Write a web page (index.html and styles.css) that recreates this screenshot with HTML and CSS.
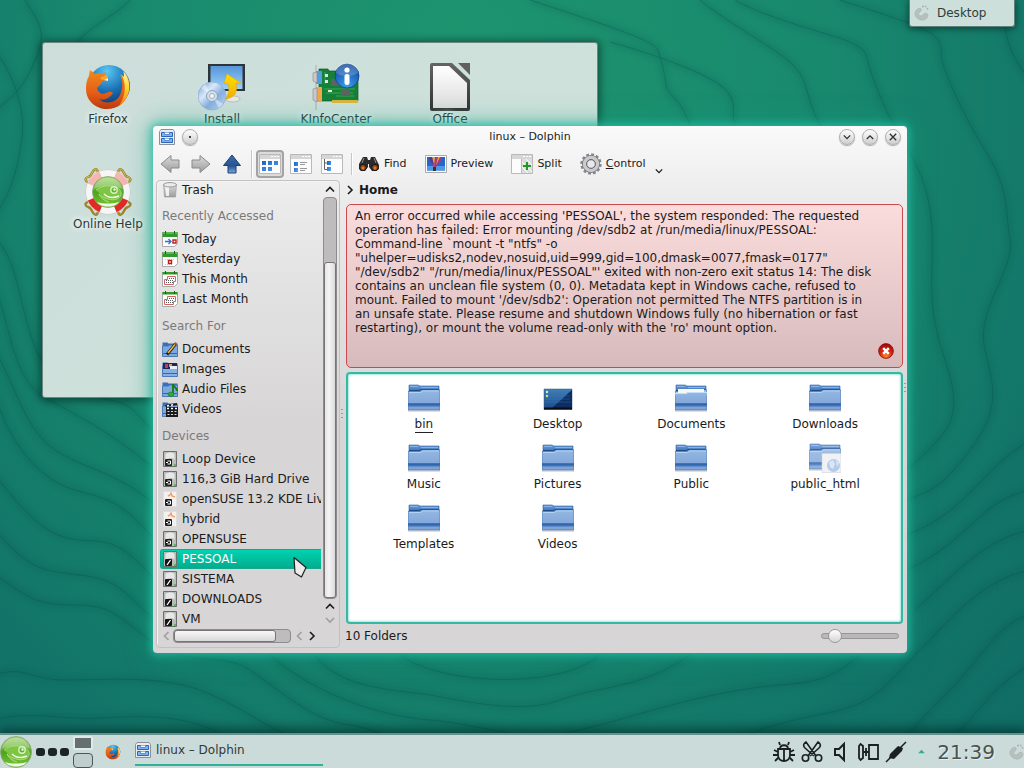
FILE: index.html
```html
<!DOCTYPE html>
<html lang="en">
<head>
<meta charset="utf-8">
<meta name="viewport" content="width=device-width, initial-scale=1">
<title>linux – Dolphin</title>
<link rel="stylesheet" href="styles.css">
</head>
<body>
<svg class="defs" aria-hidden="true">
  <defs>
    <linearGradient id="gFolder" x1="0" y1="0" x2="0" y2="1"><stop offset="0" stop-color="#94b7e2"/><stop offset="1" stop-color="#7ba1d6"/></linearGradient>
    <linearGradient id="gBack" x1="0" y1="0" x2="0" y2="1"><stop offset="0" stop-color="#6b9fdf"/><stop offset="1" stop-color="#2c5c9f"/></linearGradient>
    <linearGradient id="gGrey" x1="0" y1="0" x2="0" y2="1"><stop offset="0" stop-color="#dcdcdc"/><stop offset="1" stop-color="#9b9b9b"/></linearGradient>
    <linearGradient id="gUp" x1="0" y1="0" x2="0" y2="1"><stop offset="0" stop-color="#3f6cab"/><stop offset=".6" stop-color="#27528f"/><stop offset="1" stop-color="#7ba9df"/></linearGradient>
    <linearGradient id="gBlueBox" x1="0" y1="0" x2="1" y2="1"><stop offset="0" stop-color="#1a5fc4"/><stop offset="1" stop-color="#5aa2ee"/></linearGradient>
    <linearGradient id="gScreen" x1="0" y1="0" x2="0" y2="1"><stop offset="0" stop-color="#5596d8"/><stop offset="1" stop-color="#9cd0fa"/></linearGradient>
    <linearGradient id="gYellow" x1="0" y1="0" x2="0" y2="1"><stop offset="0" stop-color="#ffe000"/><stop offset="1" stop-color="#f2ad00"/></linearGradient>
    <linearGradient id="gDisc" x1="0" y1="0" x2="1" y2="1"><stop offset="0" stop-color="#6f9fda"/><stop offset=".35" stop-color="#d9e8f8"/><stop offset=".6" stop-color="#86aee0"/><stop offset="1" stop-color="#c8dcf4"/></linearGradient>
    <linearGradient id="gOffice" x1="0" y1="0" x2="0" y2="1"><stop offset="0" stop-color="#656565"/><stop offset="1" stop-color="#303030"/></linearGradient>
    <linearGradient id="gPaper" x1="0" y1="0" x2="0" y2="1"><stop offset="0" stop-color="#fff"/><stop offset="1" stop-color="#dcdcdc"/></linearGradient>
    <linearGradient id="gDesk" x1="0" y1="0" x2="0" y2="1"><stop offset="0" stop-color="#3f7fb4"/><stop offset="1" stop-color="#1b4b8b"/></linearGradient>
    <linearGradient id="gFox" x1="0" y1="0" x2="0" y2="1"><stop offset="0" stop-color="#f08a1c"/><stop offset=".6" stop-color="#e65c17"/><stop offset="1" stop-color="#b93a10"/></linearGradient>
    <linearGradient id="gTail" x1="0" y1="0" x2="0" y2="1"><stop offset="0" stop-color="#fff3a0"/><stop offset=".5" stop-color="#ffd52e"/><stop offset="1" stop-color="#ee7a1a"/></linearGradient>
    <radialGradient id="gGlobe" cx=".45" cy=".15" r=".9"><stop offset="0" stop-color="#5cc8f2"/><stop offset=".5" stop-color="#1c74b8"/><stop offset="1" stop-color="#0b2b63"/></radialGradient>
    <radialGradient id="gInfo" cx=".5" cy=".9" r=".9"><stop offset="0" stop-color="#3f9be8"/><stop offset="1" stop-color="#0c47a0"/></radialGradient>
    <linearGradient id="gGreen" x1="0" y1="0" x2="0" y2="1"><stop offset="0" stop-color="#a3d66f"/><stop offset=".5" stop-color="#4ea31c"/><stop offset="1" stop-color="#78c832"/></linearGradient>
    <radialGradient id="gRed" cx=".5" cy=".85" r=".8"><stop offset="0" stop-color="#f78b1e"/><stop offset=".5" stop-color="#d52a13"/><stop offset="1" stop-color="#a5060d"/></radialGradient>

    <symbol id="folder" viewBox="0 0 32 32">
      <path d="M1 3h9l2 1h19v8H1z" fill="url(#gBack)" stroke="#2f5fa3" stroke-width=".6"/>
      <path d="M2 4.500h8M13 5.500h17" stroke="#8dbaf0" stroke-width=".8"/><path d="M1 8.500h10l2-1h18" stroke="#1f4a8a" fill="none"/>
      <path d="M0 9.500h12l2-1.500h18v20H0z" fill="url(#gFolder)" stroke="#4673b0" stroke-width=".7"/>
      <path d="M1 10.400h11.500l2-1.500H31" fill="none" stroke="#c3e0fa" stroke-width=".8"/>
      <path d="M0 21.500h32v3H0z" fill="#3f74b8"/><path d="M0 21.500h32v1H0z" fill="#2659a0"/><path d="M0 29h32" stroke="#777" stroke-width=".8" opacity=".6"/>
    </symbol>
    <symbol id="folder-docs" viewBox="0 0 32 32">
      <use href="#folder"/><path d="M3 7h26v5H14l-2 1H3z" fill="#f7f7f5"/><path d="M0 11.500h11l2-1h19v3H0z" fill="#91b5e1"/><path d="M0 11.500h11l2-1h19" fill="none" stroke="#c3e0fa"/>
    </symbol>
    <symbol id="desktop" viewBox="0 0 32 32">
      <path d="M2 7h28v20.500H2z" fill="url(#gDesk)" stroke="#345a80" stroke-width=".5"/><path d="M30 8v18H10C17 20 24 13 30 8z" fill="#0d2d63"/>
      <path d="M3 14h25M3 17h25M3 20h26" stroke="#3e7bc0" stroke-width=".4"/><path d="M2 25.500h28v2H2z" fill="#080d18"/><circle cx="5" cy="10" r="1.200" fill="#d9e7d2"/><circle cx="5" cy="14" r="1.200" fill="#dfe36c"/>
    </symbol>
    <symbol id="folder-html" viewBox="0 0 32 32">
      <use href="#folder" y="-1" opacity=".85"/><path d="M13 11.500h19v19H13z" fill="#f2f2f4" stroke="#d2d4da" stroke-width=".6"/><circle cx="24.500" cy="23.500" r="6.500" fill="#b4cbe9"/><path d="M20 20l4-2 2 4-2 5-3-2zM27 18l3 3-2 4z" fill="#dbe6f5"/>
    </symbol>
    <symbol id="fox" viewBox="0 0 48 48">
      <circle cx="25" cy="23" r="21" fill="url(#gGlobe)"/>
      <path d="M40 9c5 5 6 11 5 18-2 12-11 19-22 19S2 38 2 26c0-6 1-10 3-13l1-6 5 4c3-1 5-1 7 0l4-2-2 5 3 2c-1 1-4 2-5 3-1 3-4 4-5 6 1 5 6 7 9 5 3-1 5-2 7 0-3 5-9 8-14 6 6 6 17 4 21-4 3-7 3-14 0-20 2 1 3 3 4 5 1-3 1-6 0-8z" fill="url(#gFox)"/>
      <path d="M39 8c7 7 8 18 4 26-2 4-5 7-8 9 5-8 7-16 5-25-1-3-2-6-4-7 2 1 3 2 4 3 0-2 0-4-1-6z" fill="url(#gTail)"/>
      <path d="M16 15c3-2 6-3 8-3l-1 4-5 1z" fill="#f9a42b"/><path d="M20 17l4-2v3z" fill="#fff1d0"/>
    </symbol>
    <symbol id="install" viewBox="0 0 48 48">
      <ellipse cx="35" cy="36" rx="7" ry="3" fill="#e8e8e8" stroke="#999" stroke-width=".5"/>
      <path d="M10 1h37v27H10z" fill="#2f3438"/><path d="M12.500 3h32v23h-32z" fill="url(#gScreen)"/>
      <path d="M29 11l14 9h-5c2 9-1 15-11 16 3-3 5-9 3-15l-4-1z" fill="url(#gYellow)" stroke="#e0a400" stroke-width=".5"/>
      <circle cx="14" cy="33" r="14" fill="url(#gDisc)" stroke="#92add0" stroke-width=".7"/><path d="M14 33L3 25l4-4zM14 33l11 8-4 4z" fill="#fff" opacity=".45"/><circle cx="14" cy="33" r="5.500" fill="#d4dfea" stroke="#8da5c0"/><circle cx="14" cy="33" r="2.500" fill="#f3f6f8" stroke="#7b8998" stroke-width=".6"/>
    </symbol>
    <symbol id="kinfo" viewBox="0 0 48 48">
      <path d="M4 2v45" stroke="#bbb" stroke-width="1.500"/><path d="M7 6h9l1 2h29v30H7z" fill="#16803a" stroke="#0b5a25" stroke-width=".7"/>
      <path d="M12 26h31M14 30h27M24 33h18M13 9v12" stroke="#3fae50" stroke-width=".9"/><path d="M20 37h26v3H20z" fill="#d8b53c"/>
      <path d="M4 8h6v13H4z" fill="#4f9fe0"/><path d="M4 24h6v15H4z" fill="#f1a64a"/><path d="M1 10l4-1v11l-4-2zM1 26l4-1v14l-4-2z" fill="#c9c9c9" stroke="#888" stroke-width=".6"/>
      <path d="M19 16h8v7h-8zM29 26h9v7h-9z" fill="#5b6460"/><path d="M13 11h3v3h-3zM13 17h3v3h-3zM16 27h4v2h-4z" fill="#dbe7dc"/>
      <circle cx="35" cy="13" r="12" fill="url(#gInfo)" stroke="#0c3c8c" stroke-width=".7"/><path d="M24 10a11 11 0 0 1 22 0c-5 4-17 4-22 0z" fill="#fff" opacity=".2"/><circle cx="35" cy="7" r="2.600" fill="#fff"/><rect x="32.500" y="11" width="5" height="11" rx="2.500" fill="#fff"/>
    </symbol>
    <symbol id="office" viewBox="0 0 48 48">
      <path d="M6 0h20l18 17v29a2 2 0 0 1-2 2H6a2 2 0 0 1-2-2V2a2 2 0 0 1 2-2z" fill="url(#gOffice)"/><path d="M7 3h16l18 17v25H7z" fill="url(#gPaper)"/><path d="M32 0h12v12z" fill="#606060"/>
    </symbol>
    <symbol id="gecko" viewBox="0 0 32 32">
      <circle cx="16" cy="16" r="15.500" fill="url(#gGreen)" stroke="#8aa57a" stroke-width=".8"/>
      <path d="M2 13C4-2 28-2 30 13c-6-3-20-4-28 0z" fill="#fff" opacity=".3"/>
      <path d="M4 14c7-6 16-4 20-3 4 2 6 5 5 8-1 4-7 6-13 4-4-1-7-3-9-5 1 3 5 7 10 8" fill="#7ec544" stroke="#b8e391" stroke-width=".8"/>
      <circle cx="22" cy="14" r="3.200" fill="#62b42c" stroke="#d9f2c4" stroke-width="1.400"/><circle cx="22.500" cy="13.500" r="1.200" fill="#effbe5"/><path d="M12 18c4 4 10 4 15 2" stroke="#eefbe2" stroke-width="1.500" fill="none"/>
      <path d="M5 26c6 2 15 2 22 0-4 6-18 6-22 0z" fill="#f1fae8"/>
    </symbol>
    <symbol id="help" viewBox="0 0 48 48">
      <path d="M10 14C2 16-1 11 4 9c5-1 3-7 8-8 3 1 1 6 5 9M38 14c8 2 11-3 6-5-5-1-3-7-8-8-3 1-1 6-5 9M10 34c-8-2-11 3-6 5 5 1 3 7 8 8 3-1 1-6 5-9M38 34c8-2 11 3 6 5-5 1-3 7-8 8-3-1-1-6-5-9" fill="none" stroke="#9f8427" stroke-width="2.400"/>
      <path d="M10 14C2 16-1 11 4 9c5-1 3-7 8-8 3 1 1 6 5 9M38 14c8 2 11-3 6-5-5-1-3-7-8-8-3 1-1 6-5 9" fill="none" stroke="#d9c468" stroke-width="1"/>
      <circle cx="24" cy="24" r="18" fill="none" stroke="#c7c7c7" stroke-width="9"/><circle cx="24" cy="24" r="18" fill="none" stroke="#f6f6f6" stroke-width="8"/>
      <path d="M7.500 17A18 18 0 0 1 17 7.500M31 7.500a18 18 0 0 1 9.500 9.500" stroke="#f7b4b0" stroke-width="8" fill="none"/><path d="M40.500 31a18 18 0 0 1-9.500 9.500M17 40.500A18 18 0 0 1 7.500 31" stroke="#e02a24" stroke-width="8" fill="none"/>
      <use href="#gecko" x="8" y="8" width="32" height="32"/>
    </symbol>
    <symbol id="cabinet" viewBox="0 0 16 16">
      <path d="M2 .500h12l1.500 2v13H.500v-13z" fill="#e9ebee" stroke="#8a9099"/><path d="M2.500 3.500h11v4h-11zM2.500 9.500h11v4h-11z" fill="#7db5f4" stroke="#2a65b8"/><path d="M5.500 3.500v2h5v-2M5.500 9.500v2h5v-2" fill="#fff" stroke="#5f8cc8"/>
    </symbol>
    <symbol id="arrow-left" viewBox="0 0 20 20"><path d="M1 10l10-8.500V6h8v8h-8v4.500z" fill="url(#gGrey)" stroke="#8a8a8a"/></symbol>
    <symbol id="arrow-right" viewBox="0 0 20 20"><path d="M19 10L9 1.500V6H1v8h8v4.500z" fill="url(#gGrey)" stroke="#8a8a8a"/></symbol>
    <symbol id="arrow-up" viewBox="0 0 20 20"><path d="M10 1l8.500 10.500H14V19H6v-7.500H1.500z" fill="url(#gUp)" stroke="#1d3f72"/></symbol>
    <symbol id="win" viewBox="0 0 22 20"><path d="M.500.500h21v19H.500z" fill="#fcfcfc" stroke="#b9b9b9"/><path d="M1 1h20v4H1z" fill="#d6d6d6"/><path d="M12 2.500h2M15 2.500h2M18 2.500h2" stroke="#fff"/></symbol>
    <symbol id="view-icons" viewBox="0 0 22 20"><use href="#win"/><path d="M3 7h4v4H3zM9 7h4v4H9zM15 7h4v4h-4zM3 13h4v4H3zM9 13h4v4H9z" fill="url(#gBlueBox)"/></symbol>
    <symbol id="view-details" viewBox="0 0 22 20"><use href="#win"/><path d="M4 8h4v4H4zM4 14h4v4H4z" fill="url(#gBlueBox)"/><path d="M10 8.500h7M10 10.500h5M10 14.500h7M10 16.500h5" stroke="#999"/></symbol>
    <symbol id="view-tree" viewBox="0 0 22 20"><use href="#win"/><path d="M3.500 5v10.500H6M3.500 9H6" stroke="#666" fill="none"/><path d="M6 7h4v4H6zM6 13h4v4H6z" fill="url(#gBlueBox)"/></symbol>
    <symbol id="find" viewBox="0 0 22 16"><path d="M5 1h4l1 3h2l1-3h4l4 8v4l-3 2h-4l-3-4v-3h-1v3l-3 4H3l-2-2V8z" fill="#2b2b2b"/><path d="M6 2l-2 5M16 2l2 5" stroke="#909090"/><circle cx="5" cy="11.500" r="3.200" fill="#934312" stroke="#171717"/><circle cx="17" cy="11.500" r="3.200" fill="#934312" stroke="#171717"/><circle cx="5" cy="12" r="1.500" fill="#d77a2b"/><circle cx="17" cy="12" r="1.500" fill="#d77a2b"/></symbol>
    <symbol id="preview" viewBox="0 0 22 18"><path d="M.500.500h21v17H.500z" fill="#fff" stroke="#aaa"/><path d="M2 2h18v13.500H2z" fill="#2367cb"/><path d="M2 11h18v4.500H2z" fill="#4d97e8"/><path d="M4 2h13c0 5-4 7-6 10h-2C8 9 4 7 4 2z" fill="#a63a7e"/><path d="M7 2l2 9 1-9zM13 2l-2 8 4-8z" fill="#e2a83b"/><path d="M4 2h3l2 8c-3-2-5-5-5-8z" fill="#5c3a82"/><path d="M8 12h3v4H8z" fill="#4a3018"/></symbol>
    <symbol id="split" viewBox="0 0 22 20"><use href="#win"/><path d="M11 5h10v14H11z" fill="#ddd"/><path d="M11 8l10 10M15 5l6 6M11 13l6 6" stroke="#fff"/><path d="M10.500 5v14" stroke="#bbb"/><path d="M16 8v8M12 12h8" stroke="#249724" stroke-width="2"/></symbol>
    <symbol id="gear" viewBox="0 0 22 22"><circle cx="11" cy="11" r="9.200" fill="none" stroke="#8a8a90" stroke-width="3" stroke-dasharray="2.800 2"/><circle cx="11" cy="11" r="6.500" fill="none" stroke="#707076" stroke-width="5"/><circle cx="11" cy="11" r="6.500" fill="none" stroke="#c9c9ce" stroke-width="3.600"/><circle cx="11" cy="11" r="4.300" fill="#e9e9e9" stroke="#66666c"/></symbol>
    <symbol id="trash" viewBox="0 0 16 16"><path d="M1.500 2.500h13L13.500 15h-11z" fill="url(#gGrey)" stroke="#999" stroke-width=".6"/><path d="M3 4l1 10h3V4z" fill="#fff" opacity=".8"/><ellipse cx="8" cy="2.800" rx="6.500" ry="2.200" fill="#ececec" stroke="#999"/></symbol>
    <symbol id="cal-base" viewBox="0 0 16 16"><path d="M.500 1.500h15v11l-3 3H.500z" fill="#fff" stroke="#aaa"/><path d="M.500 1h15v5H.500z" fill="#2f9a2b"/><path d="M1 2h14" stroke="#8fd47f"/><path d="M3.500 0v3M12.500 0v3" stroke="#1d5f1b"/></symbol>
    <symbol id="cal-today" viewBox="0 0 16 16"><use href="#cal-base"/><path d="M3 10.500h6M6.500 8l2.500 2.500L6.500 13" stroke="#2a72d0" stroke-width="1.300" fill="none"/><path d="M11 9h3v3h-3z" fill="#fff" stroke="#c41818" stroke-width="1.400"/></symbol>
    <symbol id="cal-yest" viewBox="0 0 16 16"><use href="#cal-base"/><path d="M3 8.500h10M3 13.500h8" stroke="#ccc" stroke-dasharray="1 1"/><path d="M6.500 9.500h3v3h-3z" fill="#fff" stroke="#c41818" stroke-width="1.400"/></symbol>
    <symbol id="cal-month" viewBox="0 0 16 16"><path d="M.500 1.500h15v11l-3 3H.500z" fill="#fff" stroke="#aaa"/><path d="M.500 1h15v2.500H.500z" fill="#2f9a2b"/><path d="M3.500 0v3M12.500 0v3" stroke="#1d5f1b"/><path d="M5.500 5.500h8v5h-2v3h-9v-5h3z" fill="#fff" stroke="#d06464"/><path d="M7 7.500h5.500M4 9.500h8M4 11.500h7" stroke="#555" stroke-dasharray="1 1"/></symbol>
    <symbol id="sf" viewBox="0 0 16 16"><path d="M.500 1.500h5l1 1h9v13H.500z" fill="#3b70b7"/><path d="M.500 5h6l1-1h8v11.500H.500z" fill="#7ba8de" stroke="#3d6fb0" stroke-width=".8"/><path d="M1 12.500h14" stroke="#3466aa"/></symbol>
    <symbol id="s-docs" viewBox="0 0 16 16"><use href="#sf"/><path d="M5 13.500L13.500 3" stroke="#1c1c1c" stroke-width="3"/><path d="M6 12L13 3.500" stroke="#f1b62f" stroke-width="1.600"/><path d="M13 3l1.500-1" stroke="#d34b3a" stroke-width="2.500"/></symbol>
    <symbol id="s-images" viewBox="0 0 16 16"><use href="#sf"/><path d="M1 2h14v6H1z" fill="#202755"/><path d="M3 3h3v4H3z" fill="#b83d6d"/><path d="M7 3h3v3H7z" fill="#dd9a4e"/><path d="M8 5h7v3H8z" fill="#e8eef6"/><path d="M1 8h14v7H1z" fill="#85b0e4"/><path d="M1 12.500h14" stroke="#3466aa"/></symbol>
    <symbol id="s-audio" viewBox="0 0 16 16"><use href="#sf"/><path d="M11 13V3c0 3 4 3 4 7" stroke="#157b15" stroke-width="1.800" fill="none"/><ellipse cx="9" cy="13.300" rx="2.900" ry="2.200" fill="#36a834" stroke="#157b15" stroke-width=".6"/></symbol>
    <symbol id="s-video" viewBox="0 0 16 16"><use href="#sf"/><path d="M4 6h12v10H4zM3 4l12-2v2L4 6z" fill="#1b1b1b"/><path d="M5 5l2-.500M9 4.300l2-.500M5 7.500h2M9 7.500h2M13 7.500h2" stroke="#fff" stroke-width="1.400"/><path d="M5.500 10.500H15M5.500 13.500H15" stroke="#ddd" stroke-dasharray="2 1.500"/></symbol>
    <symbol id="disk" viewBox="0 0 16 16"><path d="M1.500.500h13v15h-13z" fill="#b9bcb9" stroke="#6a6e6c"/><path d="M3.500 3c3-2 7-2 9 0v6c-2-3-6-2-9 0z" fill="#e7e9e7"/><path d="M12 14h2" stroke="#30c030" stroke-width="1.500"/></symbol>
    <symbol id="plug" viewBox="0 0 16 16"><rect x="3" y="8" width="7" height="7" rx="1" fill="#1d1d1d"/><path d="M5.500 10h3v3h-3M4 11.500h2" fill="none" stroke="#fff"/></symbol>
    <symbol id="d-plug" viewBox="0 0 16 16"><use href="#disk"/><use href="#plug"/></symbol>
    <symbol id="d-iso" viewBox="0 0 16 16"><path d="M1.500.500h13v15h-13z" fill="#f3f1ef" stroke="#dedede"/><path d="M6 5l2-1 1-2 1 3 3 1" stroke="#f0a070" stroke-width="1.400" fill="none"/><use href="#plug"/></symbol>
    <symbol id="d-mount" viewBox="0 0 16 16"><use href="#disk"/><rect x="3" y="8" width="7" height="7" rx="1" fill="#151515"/><path d="M5 14l3.500-5" stroke="#fff" stroke-width="1.300"/></symbol>
    <symbol id="close-red" viewBox="0 0 16 16"><circle cx="8" cy="8" r="7.400" fill="url(#gRed)" stroke="#8d0b0d" stroke-width=".8"/><path d="M5.200 5.200l5.600 5.600M10.800 5.200l-5.600 5.600" stroke="#fff" stroke-width="2.400"/></symbol>
    <symbol id="chev-up" viewBox="0 0 10 10"><path d="M1 7.500l4-4 4 4" fill="none" stroke="currentColor" stroke-width="1.600"/></symbol>
    <symbol id="chev-down" viewBox="0 0 10 10"><path d="M1 3l4 4 4-4" fill="none" stroke="currentColor" stroke-width="1.600"/></symbol>
    <symbol id="chev-left" viewBox="0 0 10 10"><path d="M7.500 1l-4 4 4 4" fill="none" stroke="currentColor" stroke-width="1.600"/></symbol>
    <symbol id="chev-right" viewBox="0 0 10 10"><path d="M3 1l4 4-4 4" fill="none" stroke="currentColor" stroke-width="1.600"/></symbol>
    <symbol id="cashew" viewBox="0 0 16 16"><path d="M6 3C1 4-1 10 3 13c4 4 11 2 11-3-1-3-4-2-5 0-3 2-5 0-4-2 1-2 3-1 2-4z" fill="#b6bfbc" stroke="#a8b4b0" stroke-width=".6"/><path d="M8 1.500h2M11 1.500h1.500M13.500 3v1.500" stroke="#a5b0ac" stroke-width="1.500"/></symbol>
    <symbol id="t-bug" viewBox="0 0 22 22"><g fill="none" stroke="#1b2020" stroke-width="1.800"><path d="M5 8h12v6c0 8-12 8-12 0zM11 8v12M7 8c0-5 8-5 8 0M7 4L6 1M15 4l1-3M5 11L1 9M5 14H0M5 17l-3 3M17 11l4-2M17 14h5M17 17l3 3"/></g></symbol>
    <symbol id="t-clip" viewBox="0 0 22 22"><g fill="none" stroke="#1b2020" stroke-width="1.600"><circle cx="4.500" cy="17" r="3.200"/><circle cx="17.500" cy="17" r="3.200"/><path d="M7 15L17 1c3 2 3 4 1 6l-9 8M15 15L5 1C2 3 2 5 4 7l9 8"/></g></symbol>
    <symbol id="t-vol" viewBox="0 0 22 22"><path d="M6 8h4l5-5v16l-5-5H6z" fill="none" stroke="#1b2020" stroke-width="2"/></symbol>
    <symbol id="t-dev" viewBox="0 0 22 22"><g fill="none" stroke="#1b2020" stroke-width="1.800"><path d="M2 5l1.500-2L6 5v12l-2.500 2L2 17zM12 4h9v14h-9zM6 11h6M9 7v8"/></g></symbol>
    <symbol id="t-plug" viewBox="0 0 22 22"><path d="M1 21l6-6M15 7l6-6" stroke="#1b2020" stroke-width="1.500"/><path d="M5 13l8-8 5 2-1 3-8 8-5-1z" fill="#1b2020"/></symbol>
    <symbol id="cursor" viewBox="0 0 16 24"><path d="M2 1.500l12 10-4.500 9.500L3 17z" fill="#ececec" stroke="#222" stroke-width="1.200" stroke-linejoin="round"/></symbol>
  </defs>
</svg>

<main class="desktop">
  <svg class="wallpaper" viewBox="0 0 1024 768" preserveAspectRatio="xMidYMid slice" aria-hidden="true">
    <defs><filter id="soft"><feGaussianBlur stdDeviation="3"/></filter>
    <g id="contours" fill="none">
      <path d="M25 0C35 18 50 30 35 60C20 100 0 100-10 120"/><path d="M130 0C110 20 90 25 75 45"/><path d="M-5 50C10 70 30 110 20 150C12 200-5 210-5 220"/>
      <path d="M-5 238C18 260 18 300 34 345C45 375 80 395 110 400S140 425 155 430"/><path d="M-5 290C10 320 10 370 40 395C75 415 110 430 155 470"/><path d="M-5 350C15 385 25 430 55 450S115 470 155 505"/><path d="M-5 395C10 445 40 480 75 490S120 500 155 540"/><path d="M-5 475C30 520 50 538 80 540S120 540 155 580"/><path d="M-5 530C30 570 40 570 80 575S120 590 155 620"/><path d="M-5 575C20 590 30 605 70 605S110 610 150 640S220 650 250 670S310 720 350 725S440 770 480 770"/>
      <path d="M-5 675C25 665 30 680 65 680S160 675 200 690S260 725 300 740S340 760 350 770"/><path d="M-5 720C30 710 60 720 100 718S170 715 200 725S235 750 240 768"/>
      <path d="M400 655C440 685 560 690 600 655"/><path d="M315 655C340 690 400 690 430 695S520 715 560 700S640 690 690 655"/><path d="M270 655C310 690 370 715 430 720S520 745 580 730S680 700 740 690S820 690 860 655"/>
      <path d="M610 42C640 50 700 70 720 85S730 110 735 126"/><path d="M530 0C590 20 655 40 658 50S664 70 666 84S680 95 690 126"/><path d="M700 0C730 25 780 50 795 67S805 100 822 128"/><path d="M735 0C770 20 835 35 850 42S866 53 868 62S880 100 895 127S930 180 932 230S925 300 945 360S950 430 907 470"/><path d="M840 0C870 10 920 25 932 34S940 50 942 60S960 110 985 150S1005 210 1010 240S975 310 985 350S1000 410 970 450S930 490 907 500"/><path d="M1005 27C1008 50 1018 65 1030 80"/>
      <path d="M1030 440C980 470 970 510 907 535"/><path d="M1030 490C980 500 970 540 907 570"/><path d="M1030 530C980 540 950 580 915 610"/><path d="M1030 570C980 580 950 620 920 650S880 700 840 710S740 725 700 768"/><path d="M1030 615C1000 620 980 660 950 690S900 740 890 768"/><path d="M1030 665C1000 680 980 710 960 730S930 750 930 768"/>
    </g></defs>
    <use href="#contours" stroke="#00453f" stroke-width="6" opacity=".18" filter="url(#soft)"/><use href="#contours" stroke="#064f49" stroke-width="1" opacity=".32"/>
  </svg>

  <section class="folder-view" aria-label="Desktop folder">
    <a class="launcher" href="#"><svg><use href="#fox"/></svg><span>Firefox</span></a>
    <a class="launcher" href="#"><svg><use href="#install"/></svg><span>Install</span></a>
    <a class="launcher" href="#"><svg><use href="#kinfo"/></svg><span>KInfoCenter</span></a>
    <a class="launcher" href="#"><svg><use href="#office"/></svg><span>Office</span></a>
    <a class="launcher" href="#"><svg><use href="#help"/></svg><span>Online Help</span></a>
  </section>

  <button class="toolbox"><svg class="i16"><use href="#cashew"/></svg><span>Desktop</span></button>

  <section class="window" aria-label="linux – Dolphin">
    <header class="titlebar">
      <div class="title-left"><svg class="i16"><use href="#cabinet"/></svg><button class="round" aria-label="Pin"><i class="dot"></i></button></div>
      <h1 class="title">linux – Dolphin</h1>
      <div class="title-right">
        <button class="round" aria-label="Minimize"><svg><use href="#chev-down"/></svg></button>
        <button class="round" aria-label="Maximize"><svg><use href="#chev-up"/></svg></button>
        <button class="round" aria-label="Close"><svg viewBox="0 0 10 10"><path d="M1 1l8 8M9 1l-8 8" stroke="currentColor" stroke-width="1.600"/></svg></button>
      </div>
    </header>
    <div class="toolbar" role="toolbar">
      <div class="group nav">
        <button class="tool" aria-label="Back"><svg class="i20"><use href="#arrow-left"/></svg></button>
        <button class="tool" aria-label="Forward"><svg class="i20"><use href="#arrow-right"/></svg></button>
        <button class="tool" aria-label="Up"><svg class="i20"><use href="#arrow-up"/></svg></button>
      </div>
      <div class="group views">
        <button class="tool view pressed" aria-label="Icons"><svg class="i22"><use href="#view-icons"/></svg></button>
        <button class="tool view" aria-label="Compact"><svg class="i22"><use href="#view-details"/></svg></button>
        <button class="tool view" aria-label="Details"><svg class="i22"><use href="#view-tree"/></svg></button>
      </div>
      <div class="group actions">
        <button class="tool"><svg class="i22"><use href="#find"/></svg>Find</button>
        <button class="tool"><svg class="i22"><use href="#preview"/></svg>Preview</button>
        <button class="tool"><svg class="i22"><use href="#split"/></svg>Split</button>
        <button class="tool"><svg class="i22"><use href="#gear"/></svg><span><u>C</u>ontrol</span><svg class="drop"><use href="#chev-down"/></svg></button>
      </div>
    </div>

    <div class="body">
      <aside class="places">
        <div class="places-main">
          <nav class="place-list">
            <a class="place first" href="#"><svg class="i16"><use href="#trash"/></svg>Trash</a>
            <h2>Recently Accessed</h2>
            <a class="place" href="#"><svg class="i16"><use href="#cal-today"/></svg>Today</a>
            <a class="place" href="#"><svg class="i16"><use href="#cal-yest"/></svg>Yesterday</a>
            <a class="place" href="#"><svg class="i16"><use href="#cal-month"/></svg>This Month</a>
            <a class="place" href="#"><svg class="i16"><use href="#cal-month"/></svg>Last Month</a>
            <h2>Search For</h2>
            <a class="place" href="#"><svg class="i16"><use href="#s-docs"/></svg>Documents</a>
            <a class="place" href="#"><svg class="i16"><use href="#s-images"/></svg>Images</a>
            <a class="place" href="#"><svg class="i16"><use href="#s-audio"/></svg>Audio Files</a>
            <a class="place" href="#"><svg class="i16"><use href="#s-video"/></svg>Videos</a>
            <h2>Devices</h2>
            <a class="place" href="#"><svg class="i16"><use href="#d-plug"/></svg>Loop Device</a>
            <a class="place" href="#"><svg class="i16"><use href="#d-plug"/></svg>116,3 GiB Hard Drive</a>
            <a class="place" href="#"><svg class="i16"><use href="#d-iso"/></svg>openSUSE 13.2 KDE Liv</a>
            <a class="place" href="#"><svg class="i16"><use href="#d-iso"/></svg>hybrid</a>
            <a class="place" href="#"><svg class="i16"><use href="#d-plug"/></svg>OPENSUSE</a>
            <a class="place selected" href="#"><svg class="i16"><use href="#d-mount"/></svg>PESSOAL</a>
            <a class="place" href="#"><svg class="i16"><use href="#d-mount"/></svg>SISTEMA</a>
            <a class="place" href="#"><svg class="i16"><use href="#d-mount"/></svg>DOWNLOADS</a>
            <a class="place" href="#"><svg class="i16"><use href="#d-mount"/></svg>VM</a>
          </nav>
          <div class="vscroll">
            <button aria-label="Scroll up"><svg><use href="#chev-up"/></svg></button>
            <div class="vgroove"><div class="vhandle"></div></div>
            <button aria-label="Scroll up"><svg><use href="#chev-up"/></svg></button>
            <button class="off" aria-label="Scroll down"><svg><use href="#chev-down"/></svg></button>
          </div>
        </div>
        <div class="hscroll">
          <button class="off" aria-label="Scroll left"><svg><use href="#chev-left"/></svg></button>
          <div class="hgroove"><div class="hhandle"></div></div>
          <button class="off" aria-label="Scroll left"><svg><use href="#chev-left"/></svg></button>
          <button aria-label="Scroll right"><svg><use href="#chev-right"/></svg></button>
        </div>
      </aside>
      <i class="grip"></i>
      <div class="content">
        <nav class="crumbs"><svg><use href="#chev-right"/></svg><a href="#">Home</a></nav>
        <div class="error" role="alert">
          <p>An error occurred while accessing 'PESSOAL', the system responded: The requested operation has failed: Error mounting /dev/sdb2 at /run/media/linux/PESSOAL: <span class="keep">Command-line</span> `mount -t "ntfs" -o "uhelper=udisks2,nodev,nosuid,uid=999,gid=100,dmask=0077,fmask=0177" "/dev/sdb2" "/run/media/linux/PESSOAL"' exited with non-zero exit status 14: The disk contains an unclean file system (0, 0). Metadata kept in Windows cache, refused to mount. Failed to mount '/dev/sdb2': Operation not permitted The NTFS partition is in an unsafe state. Please resume and shutdown Windows fully (no hibernation or fast restarting), or mount the volume read-only with the 'ro' mount option.</p>
          <button class="dismiss" aria-label="Close message"><svg class="i16"><use href="#close-red"/></svg></button>
        </div>
        <div class="files">
          <a class="file current" href="#"><svg><use href="#folder"/></svg><span>bin</span></a>
          <a class="file" href="#"><svg><use href="#desktop"/></svg><span>Desktop</span></a>
          <a class="file" href="#"><svg><use href="#folder-docs"/></svg><span>Documents</span></a>
          <a class="file" href="#"><svg><use href="#folder"/></svg><span>Downloads</span></a>
          <a class="file" href="#"><svg><use href="#folder"/></svg><span>Music</span></a>
          <a class="file" href="#"><svg><use href="#folder"/></svg><span>Pictures</span></a>
          <a class="file" href="#"><svg><use href="#folder"/></svg><span>Public</span></a>
          <a class="file" href="#"><svg><use href="#folder-html"/></svg><span>public_html</span></a>
          <a class="file" href="#"><svg><use href="#folder"/></svg><span>Templates</span></a>
          <a class="file" href="#"><svg><use href="#folder"/></svg><span>Videos</span></a>
        </div>
        <footer class="status"><label for="zoom">10 Folders</label><input id="zoom" class="zoom" type="range" min="0" max="100" value="9"></footer>
      </div>
      <i class="grip right"></i>
    </div>
    <svg class="pointer" aria-hidden="true"><use href="#cursor"/></svg>
  </section>

  <footer class="panel">
    <button class="start" aria-label="Application launcher"><svg><use href="#gecko"/></svg></button>
    <button class="activities" aria-label="Activities"><i></i><i></i><i></i></button>
    <div class="pager"><button class="active" aria-label="Desktop 1"></button><button aria-label="Desktop 2"></button></div>
    <button class="quick" aria-label="Firefox"><svg class="i16"><use href="#fox"/></svg></button>
    <button class="task"><svg class="i16"><use href="#cabinet"/></svg><span>linux – Dolphin</span></button>
    <div class="tray">
      <button aria-label="Bug reports"><svg><use href="#t-bug"/></svg></button>
      <button aria-label="Clipboard"><svg><use href="#t-clip"/></svg></button>
      <button aria-label="Volume"><svg><use href="#t-vol"/></svg></button>
      <button aria-label="Devices"><svg><use href="#t-dev"/></svg></button>
      <button aria-label="Network"><svg><use href="#t-plug"/></svg></button>
      <button class="more" aria-label="Show hidden icons"><svg viewBox="0 0 8 6"><path d="M0 5l4-4 4 4z" fill="#27b096"/></svg></button>
    </div>
    <time class="clock">21:39</time>
    <button class="cashew" aria-label="Panel settings"><svg class="i16"><use href="#cashew"/></svg></button>
  </footer>
</main>
</body>
</html>
```

FILE: styles.css
```css
* { box-sizing: border-box; }
html, body { height: 100%; }
body { margin: 0; overflow: hidden; font: 12px/14px "DejaVu Sans", sans-serif; color: #1b1b1b; }
a { color: inherit; text-decoration: none; }
button { font: inherit; color: inherit; background: none; border: 0; margin: 0; padding: 0; display: flex; align-items: center; justify-content: center; }
h1, h2, p { margin: 0; font: inherit; }
svg { display: block; flex: none; }
.defs { position: absolute; width: 0; height: 0; }
.i16 { width: 16px; height: 16px; }
.i20 { width: 20px; height: 20px; }
.i22 { width: 22px; height: 22px; }

.desktop { position: relative; height: 100%; overflow: hidden; display: flex; flex-direction: column; justify-content: flex-end;
  background: radial-gradient(ellipse at 45% 12%, #1e956e 0, #19896e 45%, #127468 80%, #0e6764 110%); }
.wallpaper { position: absolute; inset: 0; width: 100%; height: 100%; }

.folder-view { position: absolute; left: 42px; top: 42px; right: 426px; bottom: 370px; padding: 20px 90px 0 8px;
  display: grid; grid-template-columns: repeat(4, 1fr); grid-auto-rows: 105px;
  background: linear-gradient(135deg, #cddeda, #cee3da); border: 1px solid #6a8781; border-radius: 3px; box-shadow: 0 1px 8px 2px rgba(0, 35, 30, .6); }
.launcher { display: flex; flex-direction: column; align-items: center; gap: 1px; color: #2c3a38; }
.launcher svg { width: 48px; height: 48px; }
.launcher span { text-shadow: 0 0 5px #fff, 0 0 8px #fff; white-space: nowrap; }

.toolbox { position: absolute; right: 9px; top: 0; height: 27px; width: 106px; justify-content: flex-start; gap: 7px; padding: 0 4px;
  color: #2f3d3a; background: #cddfda; border: 1px solid #5f7f79; border-top: 0; border-radius: 0 0 3px 3px; box-shadow: 0 1px 6px 1px rgba(0, 35, 30, .6); }

.window { position: absolute; left: 153px; right: 117px; top: 126px; bottom: 115px; display: flex; flex-direction: column;
  background: linear-gradient(#fafafa 0, #eaeaea 80px, #d7d5d6 300px); border-radius: 4px; box-shadow: 0 0 8px 2px rgba(36, 190, 164, .85), 0 0 24px 3px rgba(20, 160, 130, .5); }
.titlebar { display: grid; grid-template-columns: 1fr auto 1fr; align-items: center; height: 22px; padding: 0 6px; font-size: 11px; }
.title-left { display: flex; align-items: center; gap: 7px; }
.title-right { display: flex; justify-content: flex-end; gap: 7px; }
.round { width: 16px; height: 16px; border-radius: 50%; background: linear-gradient(#fdfdfd, #cfcfcf); border: 1px solid #b0b0b0; box-shadow: 0 1px 1px #aaa; color: #2e2e2e; }
.round svg { width: 8px; height: 8px; }
.dot { width: 2px; height: 2px; background: #444; }

.toolbar { display: flex; align-items: center; height: 32px; font-size: 11px; padding-left: 7px; }
.group { display: flex; align-items: center; }
.nav { gap: 11px; padding-right: 9px; }
.views { gap: 3px; padding: 0 5px 0 4px; }
.views, .actions { border-left: 1px solid #c6c6c6; box-shadow: inset 1px 0 #fff; }
.actions { gap: 18px; padding-left: 6px; }
.tool { gap: 4px; min-height: 22px; }
.view { width: 28px; height: 28px; border-radius: 4px; }
.pressed { background: #dcdadb; border: 2px solid #a4a2a3; }
.drop { width: 8px; height: 8px; margin: 14px 0 0 5px; }

.body { flex: 1; min-height: 0; display: flex; padding: 0 1px 5px 3px; }
.places { width: 184px; display: flex; flex-direction: column; border: 1px solid #c3c1c2; border-radius: 4px; box-shadow: inset 1px 1px #f4f4f4; padding: 0 2px 2px 3px; }
.places-main { flex: 1; min-height: 0; display: flex; gap: 2px; }
.place-list { flex: 1; min-width: 0; overflow: hidden; }
.place-list h2 { height: 30px; padding: 10px 0 0 2px; color: #7b7a7b; }
.place { display: flex; align-items: center; gap: 4px; height: 20px; padding-left: 2px; white-space: nowrap; overflow: hidden; }
.first { height: 18px; }
.selected { color: #fff; background: linear-gradient(#00d3b0, #00ac8e); border: 1px solid #16a88e; border-right: 0; border-radius: 3px 0 0 3px; padding-left: 1px; }
.vscroll { width: 14px; display: flex; flex-direction: column; align-items: center; }
.vscroll button { height: 14px; width: 14px; }
.vscroll button:first-child { height: 16px; }
.vscroll svg, .hscroll svg { width: 10px; height: 10px; }
.off { color: #a09fa0; }
.vgroove { flex: 1; width: 14px; padding-top: 64px; background: #bebcbd; border: 1px solid #8d8b8c; border-radius: 4px; }
.vhandle { height: 100%; border: 1px solid #777576; border-radius: 3px; background: linear-gradient(90deg, #e6e5e5, #f4f4f4 40%, #dcdbdb); }
.hscroll { display: flex; align-items: center; gap: 2px; height: 18px; }
.hscroll button { width: 11px; height: 14px; }
.hgroove { width: 118px; height: 14px; padding-right: 14px; background: #bebcbd; border: 1px solid #8d8b8c; border-radius: 4px; }
.hhandle { height: 100%; border: 1px solid #777576; border-radius: 3px; background: linear-gradient(#f8f8f8, #d9d8d8); }
.grip { align-self: center; flex: none; width: 2px; height: 10px; margin: 0 2px 0 1px; background: repeating-linear-gradient(#999 0 1px, transparent 1px 4px); }
.grip.right { margin: 0 0 52px 1px; }

.content { flex: 1; min-width: 0; display: flex; flex-direction: column; }
.crumbs { display: flex; align-items: center; gap: 4px; height: 20px; font-weight: bold; }
.crumbs svg { width: 10px; height: 10px; }
.error { display: flex; flex-direction: column; align-items: flex-end; gap: 8px; margin: 4px 0 4px 1px; padding: 4px 8px 8px; background: linear-gradient(#fbdcdd, #d7bbbc); border: 1px solid #c9494c; border-radius: 5px; }
.error p { align-self: stretch; padding-right: 18px; overflow-wrap: anywhere; }
.keep { white-space: nowrap; }
.files { flex: 1; min-height: 0; overflow: hidden; display: grid; grid-template-columns: repeat(4, 1fr); grid-auto-rows: 60px; margin-left: 1px; padding: 8px 9px 0; background: #fff; border: 2px solid #35b9a4; border-radius: 4px; box-shadow: inset 0 0 2px 1px #a9e7dc; }
.file { display: flex; flex-direction: column; align-items: center; gap: 3px; }
.file svg { width: 32px; height: 32px; }
.current span { border-bottom: 1px solid #222; height: 16px; }
.status { display: flex; align-items: center; justify-content: space-between; height: 24px; }
.zoom { appearance: none; width: 78px; height: 14px; margin: 0 4px 0 0; background: none; }
.zoom::-webkit-slider-runnable-track { height: 6px; border: 1px solid #979596; border-radius: 3px; background: #bab8b9; }
.zoom::-webkit-slider-thumb { appearance: none; width: 14px; height: 14px; margin-top: -5px; border-radius: 50%; border: 1px solid #999; background: linear-gradient(#fff, #d5d5d5); }
.pointer { position: absolute; left: 139px; top: 430px; width: 16px; height: 24px; }

.panel { position: relative; display: flex; align-items: center; height: 35px; background: #cbdbda; border-top: 2px solid #688f8b; box-shadow: 0 -3px 10px 2px rgba(0, 40, 38, .6); color: #30393a; overflow: visible; }
.start svg { width: 32px; height: 32px; }
.activities { gap: 3px; margin-left: 4px; }
.activities i { width: 9px; height: 8px; border-radius: 3px; background: #1c2424; }
.pager { display: flex; flex-direction: column; gap: 3px; margin-left: 4px; }
.pager button { width: 20px; height: 15px; border: 1px solid #4b5657; border-radius: 4px; background: #bfcfce; }
.pager .active { height: 14px; border: 2px solid #dfe9e8; border-radius: 2px; background: #656f70; }
.quick { margin-left: 12px; }
.task { align-self: stretch; justify-content: flex-start; gap: 5px; width: 188px; margin: 0 auto 2px 14px; border-bottom: 2px solid #2fb299; }
.tray { display: flex; align-items: center; gap: 6px; }
.tray svg { width: 22px; height: 22px; }
.tray .more { margin-left: 5px; }
.tray .more svg { width: 7px; height: 5px; }
.clock { margin-left: 12px; font-size: 20px; line-height: 24px; color: #4a5354; text-shadow: 1px 1px #e6eeed; }
.cashew { margin: 0 -1px 0 14px; }
```
